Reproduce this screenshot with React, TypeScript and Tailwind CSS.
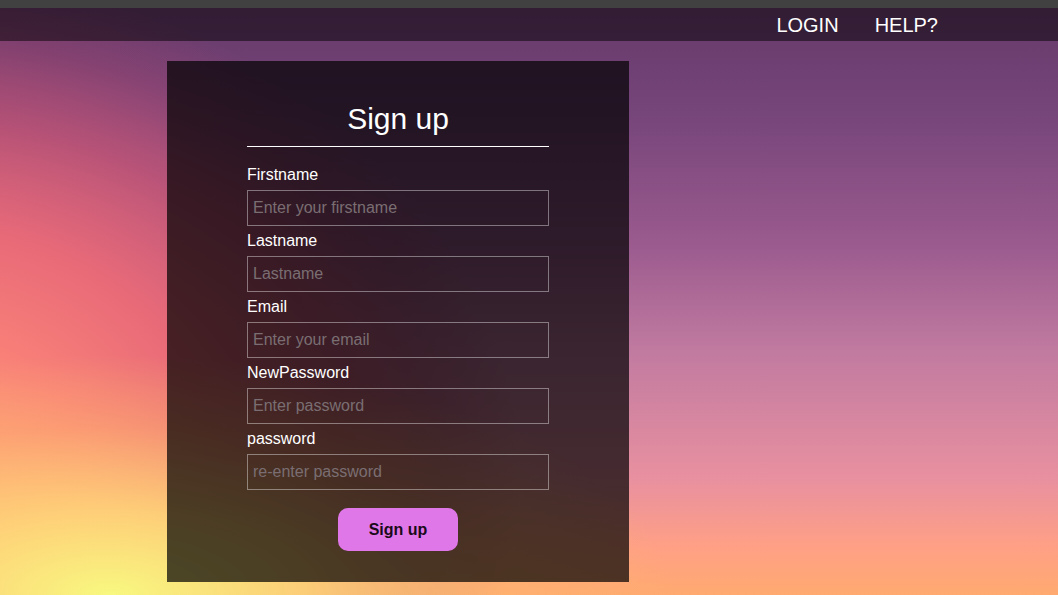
import React from "react";

const fields = [
  { label: "Firstname", placeholder: "Enter your firstname", type: "text" },
  { label: "Lastname", placeholder: "Lastname", type: "text" },
  { label: "Email", placeholder: "Enter your email", type: "email" },
  { label: "NewPassword", placeholder: "Enter password", type: "password" },
  { label: "password", placeholder: "re-enter password", type: "password" },
];

export default function App() {
  return (
    <div className="h-[595px] w-full flex flex-col overflow-hidden font-['Liberation_Sans',Arial,sans-serif]">
      <div className="h-[8px] bg-[#414141] shrink-0" />
      <div className="flex-1 flex flex-col bg-[radial-gradient(ellipse_560px_240px_at_110px_100%,#f8f880_0%,rgba(255,215,120,0.9)_35%,rgba(255,185,110,0.45)_70%,rgba(255,175,110,0)_100%),radial-gradient(ellipse_600px_500px_at_-80px_80%,#ffa078_0%,#f88078_28%,#e86a78_50%,rgba(205,85,115,0.7)_72%,rgba(180,70,110,0.3)_88%,rgba(180,70,110,0)_100%),linear-gradient(to_bottom,#663a6a_0%,#76457a_18%,#9a5a8e_40%,#c07aa0_58%,#e890a0_80%,#ffa085_92%,#ffaa70_100%)]">
        <nav className="h-[33px] shrink-0 bg-black/50 flex items-center justify-end gap-[36px] pr-[120px] text-[20px] text-white">
          <a href="#" className="leading-none">LOGIN</a>
          <a href="#" className="leading-none">HELP?</a>
        </nav>
        <div className="pl-[167px] pt-[20px]">
          <div className="w-[462px] h-[521px] bg-black/70 flex flex-col items-center">
            <form className="w-[302px] flex flex-col" onSubmit={(e) => e.preventDefault()}>
              <h2 className="pt-[41px] pb-[10px] text-center text-[30px] leading-[34px] text-white border-b border-white">
                Sign up
              </h2>
              <div className="pt-[13px] flex flex-col">
                {fields.map((f) => (
                  <div key={f.label} className="flex flex-col">
                    <label className="mt-[6px] mb-[6px] text-[16px] leading-[18px] text-white">{f.label}</label>
                    <input
                      type={f.type}
                      placeholder={f.placeholder}
                      className="h-[36px] w-full border border-white/40 bg-transparent pl-[5px] text-[16px] text-white outline-none placeholder:text-[#7a6e72]"
                    />
                  </div>
                ))}
              </div>
              <button
                type="submit"
                className="mt-[18px] self-center w-[120px] h-[43px] rounded-[10px] bg-[#e077e8] text-[16px] font-bold text-[#1a0a1a]"
              >
                Sign up
              </button>
            </form>
          </div>
        </div>
      </div>
    </div>
  );
}
